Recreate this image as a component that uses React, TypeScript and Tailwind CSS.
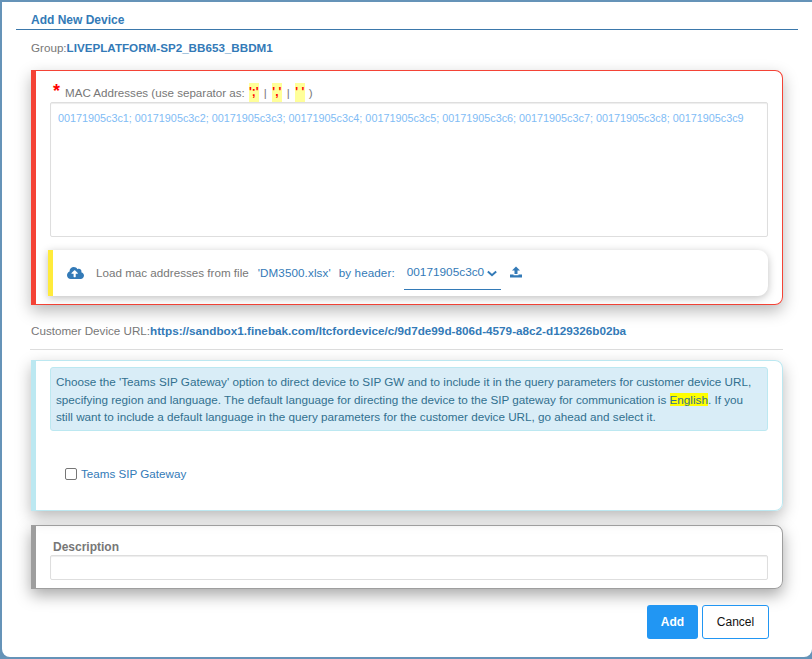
import { FaCloudUploadAlt } from 'react-icons/fa';

const macs = [
	'00171905c3c1',
	'00171905c3c2',
	'00171905c3c3',
	'00171905c3c4',
	'00171905c3c5',
	'00171905c3c6',
	'00171905c3c7',
	'00171905c3c8',
	'00171905c3c9',
].join('; ');

function Sep({ children }: { children: string }) {
	return (
		<span className="h-[19px] w-[10px] bg-[#ffff99] text-center text-xs leading-[19px] font-bold whitespace-pre text-[#ff0000]">
			{children}
		</span>
	);
}

export default function App() {
	return (
		<div className="h-[659px] w-[812px] overflow-hidden bg-[#6593b8] pt-[2px] pl-[2px] font-['Liberation_Sans',Arial,sans-serif] text-[11.65px] text-[#777777]">
			<div className="h-[655px] w-[810px] rounded-b-lg bg-white">
				<div className="ml-[14px] h-[28px] w-[782px] border-b border-[#3b78ab] pt-[11px] pl-[15px] text-xs leading-[14px] font-bold text-[#337ab7]">
					Add New Device
				</div>
				<div className="mt-[11px] ml-[29px] leading-[14px]">
					Group:<span className="font-bold text-[#337ab7]">LIVEPLATFORM-SP2_BB653_BBDM1</span>
				</div>

				<div className="mt-[15px] ml-[29px] h-[235px] w-[752px] rounded-r-lg border border-l-[5px] border-[#f44336] pt-[12px] pl-[14px] shadow-[0_6px_16px_rgba(0,0,0,0.28)]">
					<div className="ml-[3px] flex h-[19px] items-center text-[11.6px] leading-[14px] whitespace-nowrap">
						<span className="mr-[5px] self-start text-lg leading-[16px] font-bold text-[#ff0000]">*</span>
						<span>MAC Addresses (use separator as:</span>
						<span className="ml-[4px] flex items-center">
							<Sep>';'</Sep>
							<span className="mx-[5px]">|</span>
							<Sep>','</Sep>
							<span className="mx-[5px]">|</span>
							<Sep>' '</Sep>
							<span className="ml-[4px]">)</span>
						</span>
					</div>
					<div className="h-[135px] w-[718px] rounded-[2px] border border-[#dedede] px-[7px] pt-[8px] text-[10.8px] leading-[14px] text-[#7fbcf5] shadow-[inset_0_1px_1px_rgba(0,0,0,0.075)]">
						{macs}
					</div>
					<div className="mt-[13px] -ml-[2px] flex h-[46px] w-[720px] items-center rounded-r-[10px] border-l-[5px] border-[#ffeb3b] bg-white pl-[14px] shadow-[0_2px_8px_rgba(0,0,0,0.25)]">
						<FaCloudUploadAlt className="h-[14px] w-[17px] text-[#337ab7]" />
						<span className="ml-[12px]">Load mac addresses from file</span>
						<span className="ml-[9px] tracking-[0.1px] text-[#337ab7]">'DM3500.xlsx'</span>
						<span className="ml-[8px] tracking-[0.1px] text-[#337ab7]">by header:</span>
						<div className="mt-[1px] ml-[9px] flex h-[32px] w-[97px] items-center border-b border-[#337ab7] pl-[3px] text-[11.8px] text-[#337ab7]">
							00171905c3c0
							<svg viewBox="0 0 12 8" className="ml-[3px] h-[7px] w-[10px] fill-none stroke-[#337ab7] stroke-[2.4]">
								<path d="M1 1.5 L6 6 L11 1.5" />
							</svg>
						</div>
						<svg viewBox="0 0 12 12" className="mb-[3px] ml-[9px] h-[12px] w-[12px] fill-[#337ab7]">
							<path d="M6 0.5 L10 4.5 H7.5 V8 H4.5 V4.5 H2 Z" />
							<path d="M0 8.5 H3.5 V9.3 H8.5 V8.5 H12 V11.5 H0 Z" />
						</svg>
					</div>
				</div>

				<div className="mt-[19px] ml-[29px] leading-[14px]">
					Customer Device URL:
					<span className="text-[11.72px] font-bold text-[#337ab7]">
						https://sandbox1.finebak.com/ltcfordevice/c/9d7de99d-806d-4579-a8c2-d129326b02ba
					</span>
				</div>
				<div className="mt-[11px] ml-[28px] h-px w-[753px] bg-[#dddddd]" />

				<div className="mt-[10px] ml-[29px] h-[151px] w-[752px] rounded-r-lg border border-l-[5px] border-[#bce8f1] pt-[6px] pl-[14px] shadow-[0_6px_16px_rgba(0,0,0,0.28)]">
					<div className="h-[64px] w-[718px] rounded-[3px] border border-[#bce8f1] bg-[#d9edf7] px-[5px] pt-[5px] text-[11.7px] leading-[17.5px] text-[#31708f]">
						Choose the 'Teams SIP Gateway' option to direct device to SIP GW and to include it in the query parameters for customer device URL, specifying region and language. The default language for directing the device to the SIP gateway for communication is{' '}
						<span className="bg-[#ffff00]">English</span>. If you still want to include a default language in the query parameters for the customer device URL, go ahead and select it.
					</div>
					<label className="mt-[36px] ml-[15px] flex items-center gap-[4px] leading-[14px] text-[#337ab7]">
						<input type="checkbox" className="h-[12px] w-[12px] appearance-none rounded-[2px] border border-[#767676] bg-white" />
						Teams SIP Gateway
					</label>
				</div>

				<div className="mt-[14px] ml-[29px] h-[64px] w-[752px] rounded-r-lg border border-l-[5px] border-[#9e9e9e] pt-[14px] pl-[14px] shadow-[0_6px_16px_rgba(0,0,0,0.35)]">
					<div className="ml-[3px] text-xs leading-[14px] font-bold">Description</div>
					<input className="mt-px h-[25px] w-[718px] rounded-[2px] border border-[#dedede] bg-white shadow-[inset_0_1px_1px_rgba(0,0,0,0.075)]" />
				</div>

				<div className="mt-[16px] ml-[645px] flex gap-[4px] text-xs">
					<button className="h-[34px] w-[51px] rounded-[3px] bg-[#2196f3] font-bold text-white">Add</button>
					<button className="h-[34px] w-[67px] rounded-[3px] border border-[#2196f3] bg-white text-[#111111]">Cancel</button>
				</div>
			</div>
		</div>
	);
}
